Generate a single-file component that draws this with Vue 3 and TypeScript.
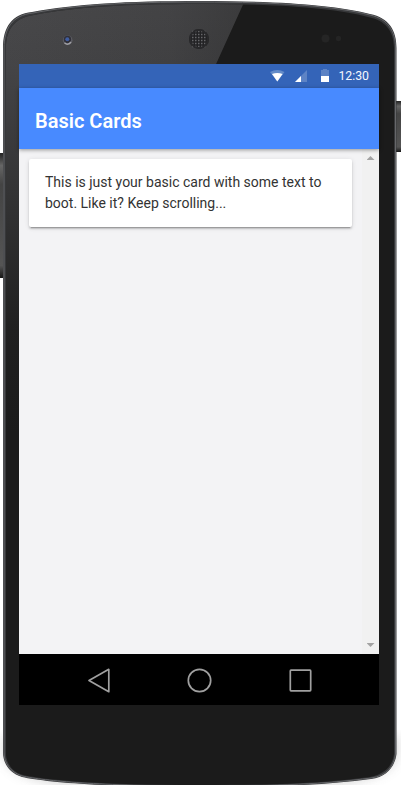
<script setup lang="ts">
const title: string = 'Basic Cards'
const time: string = '12:30'
const cardText: string = 'This is just your basic card with some text to boot. Like it? Keep scrolling...'
const speakerRows: number[] = [31, 34, 37, 40, 43, 46]
</script>

<template>
  <main class="device">
    <svg class="shell" viewBox="0 0 401 785" aria-hidden="true">
      <defs>
        <linearGradient id="gloss" x1="0" y1="0" x2="0" y2="1">
          <stop offset="0" stop-color="#49494b" />
          <stop offset=".08" stop-color="#454547" />
          <stop offset=".25" stop-color="#333334" />
          <stop offset=".42" stop-color="#202020" />
          <stop offset=".55" stop-color="#1b1b1b" />
        </linearGradient>
        <linearGradient id="gloss-side" x1="0" y1="0" x2="1" y2="0">
          <stop offset="0" stop-color="#1b1b1b" stop-opacity="0" />
          <stop offset=".7" stop-color="#1b1b1b" stop-opacity=".12" />
          <stop offset="1" stop-color="#1b1b1b" stop-opacity=".3" />
        </linearGradient>
        <linearGradient id="button" x1="0" y1="0" x2="0" y2="1">
          <stop offset="0" stop-color="#222" />
          <stop offset=".1" stop-color="#666" />
          <stop offset=".25" stop-color="#444" />
          <stop offset=".9" stop-color="#555" />
          <stop offset="1" stop-color="#161616" />
        </linearGradient>
        <filter id="soft" x="-10%" y="-10%" width="120%" height="120%">
          <feGaussianBlur stdDeviation="6" />
        </filter>
        <clipPath id="body-clip">
          <path d="M6 48C6 31 13 18 34 15C74 7 125 4 200 4C280 4 335 8 368 17C385 20 394 31 394 48V754C393 764 386 774 370 777C325 783 280 785 200 785C100 785 45 780 23 775C11 771 6 762 6 752Z" />
        </clipPath>
      </defs>
      <path d="M4 735V756Q12 781 80 785H320Q388 781 397 756V735Z" fill="#999" opacity=".45" filter="url(#soft)" />
      <rect x="-2" y="153" width="7" height="125" fill="url(#button)" />
      <rect x="395" y="101" width="8" height="51" fill="url(#button)" />
      <path d="M3 48C3 27 12 14 32 12C75 4 125 1 200 1C280 1 335 5 370 14C389 18 396.5 30 396.5 48V754C395 766 387 777 371 779C325 785 280 787 200 787C100 787 45 782 22 777C9 773 3 763 3 752Z" fill="#37383a" />
      <path d="M4 48C4 29 12 15 33 13C75 5 125 2 200 2C280 2 335 6 370 15C388 19 395.5 31 395.5 48V754C394 766 387 776 371 778C325 784 280 786 200 786C100 786 45 781 22 776C10 772 4 763 4 752Z" fill="none" stroke="#66676a" />
      <g clip-path="url(#body-clip)">
        <rect width="401" height="785" fill="#1b1b1b" />
        <path d="M0 0H245L216 64H19V785H0Z" fill="url(#gloss)" />
        <path d="M0 0H245L216 64H0Z" fill="url(#gloss-side)" />
      </g>
      <circle cx="67.7" cy="40.2" r="4.8" fill="#5e5e65" />
      <circle cx="67.5" cy="39.5" r="3.7" fill="#303039" />
      <circle cx="67.3" cy="39.2" r="2" fill="#405da0" />
      <path d="M64.5 42.7Q68 46 71 42" fill="none" stroke="#a0a0a5" stroke-width="1.4" />
      <circle cx="199" cy="39" r="10" fill="#222224" />
      <g stroke="#666669" stroke-width="1.5" stroke-dasharray="1.5 1.5">
        <path v-for="y in speakerRows" :key="y" :d="`M192 ${y + .5}H207`" />
      </g>
      <circle cx="199" cy="39" r="9" fill="none" stroke="#29292b" stroke-width="2" />
      <circle cx="325.5" cy="38.5" r="4" fill="#252525" />
      <circle cx="338.5" cy="38.5" r="2.7" fill="#242424" />
    </svg>
    <section class="screen">
      <div class="status">
        <svg class="status-icons" viewBox="0 0 64 24" aria-hidden="true">
          <path d="M3 8Q10.3 4 17.5 8L10.3 17.4Z" fill="#648cc9" />
          <path d="M5 10Q10.3 8 15.6 10L10.3 17.4Z" fill="#fff" />
          <path d="M40 6V18H28Z" fill="#5d83c5" />
          <path d="M34 12V18H28Z" fill="#fff" />
          <path d="M54 6H56V5H60V6H62V12H54Z" fill="#5d83c5" />
          <path d="M54 12H62V18H54Z" fill="#fff" />
        </svg>
        <span>{{ time }}</span>
      </div>
      <header class="toolbar"><h1>{{ title }}</h1></header>
      <div class="content">
        <div class="scroll-area">
          <article class="card">{{ cardText }}</article>
        </div>
        <div class="scrollbar">
          <i class="arrow-up"></i>
          <i class="arrow-down"></i>
        </div>
      </div>
      <nav class="navigation">
        <svg viewBox="0 0 360 51" aria-label="Navigation" fill="none" stroke="#a0a0a0" stroke-width="1.7" stroke-linejoin="round">
          <path d="M70 26.5L89.8 15.3V37.7Z" />
          <circle cx="180.5" cy="26.5" r="11.2" />
          <rect x="271.3" y="16.2" width="20.4" height="20.6" rx=".7" />
        </svg>
      </nav>
    </section>
  </main>
</template>

<style>
body {
  margin: 0;
  background: #fff;
  overflow: hidden;
}
</style>

<style scoped>
.device {
  position: relative;
  width: 401px;
  height: 785px;
  padding: 64px 22px 80px 19px;
  box-sizing: border-box;
  overflow: hidden;
  font-family: Roboto, sans-serif;
}
.shell {
  position: absolute;
  inset: 0;
  width: 401px;
  height: 785px;
}
.screen {
  position: relative;
  display: flex;
  flex-direction: column;
  width: 360px;
  height: 641px;
  background: #f3f3f5;
}
.status {
  display: flex;
  justify-content: flex-end;
  gap: 7px;
  height: 24px;
  padding-right: 10px;
  box-sizing: border-box;
  background: #3464b8;
  color: #f4f7fd;
  font-size: 12.3px;
  line-height: 25px;
}
.status-icons {
  width: 64px;
  height: 24px;
}
.toolbar {
  position: relative;
  height: 61px;
  flex: none;
  padding: 5px 16px 0;
  box-sizing: border-box;
  background: #488aff;
  box-shadow: 0 1px 4px rgba(0, 0, 0, .4);
}
h1 {
  margin: 0;
  color: #fff;
  font-size: 20px;
  font-weight: 600;
  line-height: 56px;
}
.content {
  display: flex;
  flex: 1;
}
.scroll-area {
  flex: 1;
  padding: 10px;
}
.card {
  height: 68px;
  padding: 13px 16px;
  box-sizing: border-box;
  border-radius: 2px;
  background: #fff;
  color: #333;
  font-size: 14px;
  font-weight: 400;
  line-height: 21px;
  box-shadow: 0 2px 2px rgba(0, 0, 0, .14), 0 3px 1px -2px rgba(0, 0, 0, .2), 0 1px 5px rgba(0, 0, 0, .12);
}
.scrollbar {
  display: flex;
  flex-direction: column;
  justify-content: space-between;
  align-items: center;
  width: 17px;
  padding: 7px 0;
  box-sizing: border-box;
  background: #f1f1f1;
}
.arrow-up,
.arrow-down {
  width: 8px;
  height: 4px;
  background: #a3a3a3;
}
.arrow-up {
  clip-path: polygon(50% 0, 100% 100%, 0 100%);
}
.arrow-down {
  clip-path: polygon(0 0, 100% 0, 50% 100%);
}
.navigation {
  height: 51px;
  background: #000;
}
.navigation svg {
  display: block;
  width: 360px;
  height: 51px;
}
</style>
